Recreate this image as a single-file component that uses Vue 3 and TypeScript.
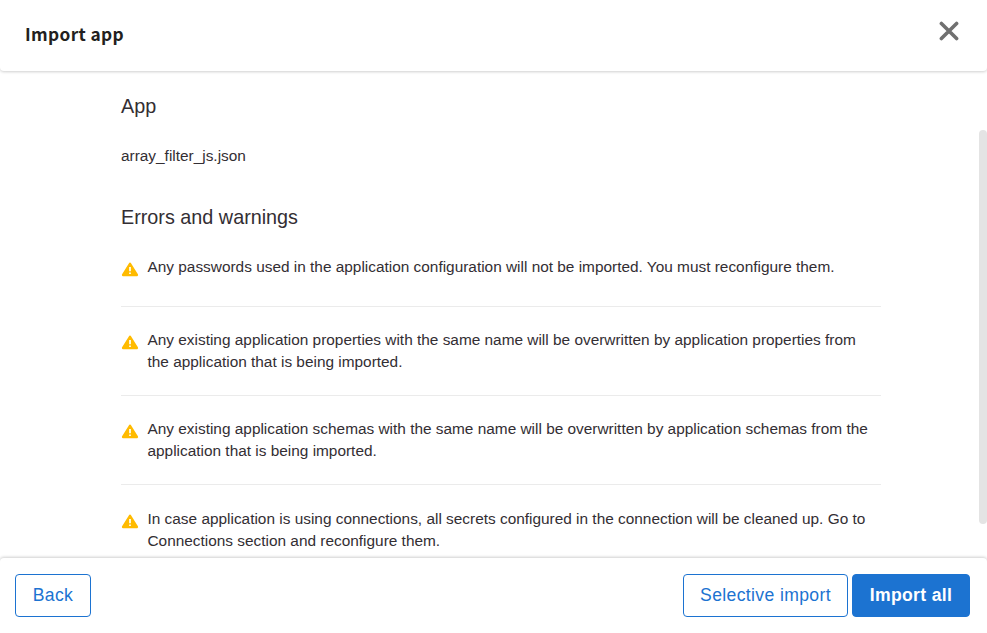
<script setup lang="ts">
const warnings: string[][] = [
  ['Any passwords used in the application configuration will not be imported. You must reconfigure them.'],
  ['Any existing application properties with the same name will be overwritten by application properties from', 'the application that is being imported.'],
  ['Any existing application schemas with the same name will be overwritten by application schemas from the', 'application that is being imported.'],
  ['In case application is using connections, all secrets configured in the connection will be cleaned up. Go to', 'Connections section and reconfigure them.'],
]
</script>

<template>
  <div class="dialog">
    <header class="header">
      <h1 class="title">Import app</h1>
      <button class="close" aria-label="Close">
        <svg width="20" height="20" viewBox="0 0 20 20"><path d="M2.4 2.4L17.6 17.6M17.6 2.4L2.4 17.6" fill="none" stroke="#707070" stroke-width="3.6" stroke-linecap="round" /></svg>
      </button>
    </header>
    <main class="body">
      <div class="content">
        <h2>App</h2>
        <p class="file">array_filter_js.json</p>
        <h2 class="second">Errors and warnings</h2>
        <ul>
          <li v-for="(lines, i) in warnings" :key="i">
            <svg class="warn" width="18" height="16" viewBox="0 0 18 16">
              <path d="M9 2.8L15.9 14H2.1Z" fill="#ffbb00" stroke="#ffbb00" stroke-width="2.4" stroke-linejoin="round" />
              <path d="M9 6V10.2M9 11.4V13" stroke="#fff" stroke-width="1.7" />
            </svg>
            <div><span v-for="line in lines" :key="line" class="line">{{ line }}</span></div>
          </li>
        </ul>
      </div>
      <div class="track"><div class="thumb"></div></div>
    </main>
    <footer class="footer">
      <button class="btn back">Back</button>
      <button class="btn selective">Selective import</button>
      <button class="btn primary">Import all</button>
    </footer>
  </div>
</template>

<style>
body { margin: 0; overflow: hidden; }
</style>
<style scoped>
* { box-sizing: border-box; }
.dialog { width: 987px; height: 633px; display: flex; flex-direction: column; background: #fff; color: #332e33; font-family: "Liberation Sans", Arial, sans-serif; overflow: hidden; }
.header { height: 71px; flex: none; display: flex; justify-content: space-between; padding: 0 28px 0 25px; border-radius: 0 0 4px 4px; box-shadow: 0 1px 3px rgba(0,0,0,.19); }
.title { margin: 21px 0 0; font: 700 17.3px/26px "Noto Sans CJK SC", sans-serif; letter-spacing: .35px; color: #231f20; }
.close { margin: 21px 0 0; padding: 0; width: 20px; height: 20px; border: 0; background: none; }
.close svg { display: block; }
.body { flex: 1; min-height: 0; display: flex; justify-content: space-between; overflow: hidden; padding-left: 121px; }
.content { width: 760px; padding-top: 23px; }
h2 { margin: 0; font-size: 19.8px; line-height: 24px; font-weight: 400; }
.file { margin: 27px 0 0; font-size: 15.4px; line-height: 22px; }
.second { margin-top: 38px; }
ul { margin: 27px 0 0; padding: 0; list-style: none; }
li { display: flex; padding-bottom: 28px; margin-bottom: 22px; border-bottom: 1px solid #ebebeb; font-size: 15.4px; line-height: 22px; }
li + li { padding-bottom: 22px; }
li:last-child { padding-top: 1px; }
.warn { flex: none; margin: 5px 8.5px 0 0; }
.line { display: block; white-space: nowrap; }
.track { width: 8px; padding-top: 59px; }
.thumb { height: 394px; border-radius: 4px; background: #e4e4e4; }
.footer { height: 75px; flex: none; display: flex; align-items: flex-start; padding: 16px 17px 0 15px; border-radius: 4px 4px 0 0; box-shadow: 0 -1px 3px rgba(0,0,0,.19); background: #fff; }
.btn { height: 43px; padding: 0; border: 1px solid #1c73d1; border-radius: 4px; background: #fff; color: #1c73d1; font: 400 17.6px/41px "Liberation Sans", sans-serif; letter-spacing: .35px; }
.back { width: 76px; margin-right: auto; }
.selective { width: 165px; margin-right: 4px; }
.primary { width: 118px; background: #1c73d1; color: #fff; font-weight: 700; }
</style>
